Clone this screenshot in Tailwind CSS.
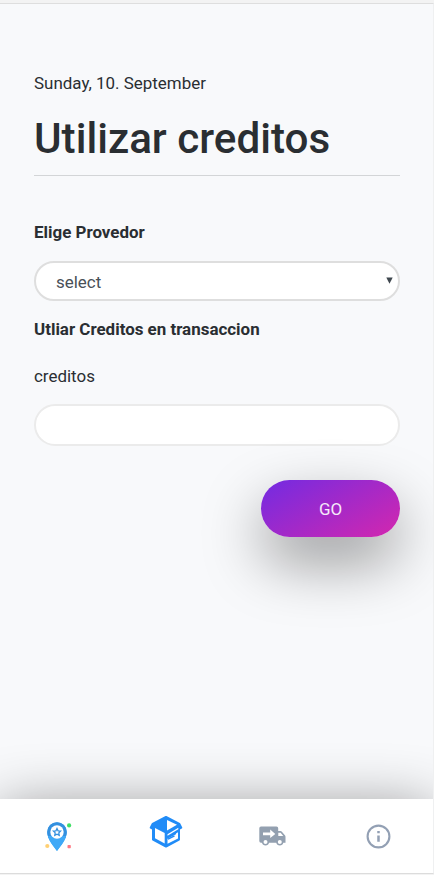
<!DOCTYPE html>
<html lang="es">
<head>
<meta charset="utf-8">
<meta name="viewport" content="width=device-width, initial-scale=1">
<title>Utilizar creditos</title>
<script src="https://cdn.jsdelivr.net/npm/@tailwindcss/browser@4"></script>
</head>
<body class="font-[Roboto,sans-serif] text-[16.94px] leading-6 text-[#2a2e32] bg-[#f3f3f3]">
<div class="flex h-[875px] w-[434px] flex-col overflow-hidden pt-[3px]">
  <div class="flex h-[871px] flex-col overflow-hidden border-y border-r border-t-[#dedede] border-r-[#eff0f1] border-b-[#dcdcdc] bg-[#f8f9fb]">
    <main class="flex flex-1 flex-col px-[34px] pr-[33px] pt-[67px]">
      <p>Sunday, 10. September</p>
      <h1 class="mt-[19px] text-[42.2px] leading-[50px] font-medium whitespace-nowrap">Utilizar creditos</h1>
      <hr class="mt-[11px] border-t border-[#d3d5d7]">
      <form class="flex flex-col">
        <label class="mt-[44px] font-bold">Elige Provedor</label>
        <div class="mt-[17px] flex h-10 items-center justify-between rounded-full border-2 border-[#dedede] bg-white pl-[20px] pr-[5px] text-[#495057]">
          <span class="pt-px">select</span>
          <svg class="-mt-[1px] h-[7px] w-[7px]" viewBox="0 0 7 7" fill="#3f474e"><path d="M.3.5h6.400L3.500 6.700z"/></svg>
        </div>
        <label class="mt-[16px] font-bold">Utliar Creditos en transaccion</label>
        <label class="mt-[23px]">creditos</label>
        <input class="mt-[16px] h-[42px] rounded-full border-2 border-[#ebebeb] bg-white px-5">
        <button type="button" class="mt-[34px] h-[57px] w-[139px] self-end rounded-full bg-linear-[150deg,#722be2,#d427ae] text-[16.94px] text-white/90 shadow-[0_25px_60px_rgba(0,0,0,0.4)]">GO</button>
      </form>
    </main>
    <nav class="grid h-[74px] shrink-0 grid-cols-4 bg-white shadow-[0_10px_60px_rgba(0,0,0,0.45)]">
      <div class="flex justify-center pt-[22px] pl-[8px]">
        <svg class="h-[31px] w-[28px]" viewBox="0 0 28 31" fill="none">
          <path d="M13 30C9 24 3.200 18 3.200 11a9.800 9.800 0 0 1 19.600 0C22.800 18 17 24 13 30z" fill="#40a9f7"/>
          <path d="M13 1.200A9.800 9.800 0 0 0 3.200 11c0 2 .6 4.100 1.500 6h16.600c.9-1.900 1.500-4 1.500-6A9.800 9.800 0 0 0 13 1.200z" fill="#3490df"/>
          <path d="M3.900 15h18.200c-1.500 6-5.700 10-9.100 15-3.400-5-7.600-9-9.100-15z" fill="#40a9f7"/>
          <circle cx="13" cy="11" r="6.700" fill="#fff"/>
          <path d="m13 7.500 1.100 2.300 2.500.3-1.800 1.800.4 2.500-2.200-1.200-2.200 1.200.4-2.500-1.800-1.800 2.500-.3z" stroke="#3490df" stroke-width="1.300"/>
          <circle cx="25.100" cy="4.400" r="2.100" fill="#3fdf65"/><circle cx="3.300" cy="25" r="2.100" fill="#ffd074"/><rect x="23.500" y="24" width="3.300" height="3.300" rx=".7" fill="#ff7882"/>
        </svg>
      </div>
      <div class="flex justify-center pt-[16px] pl-[8px]">
        <svg class="h-[33px] w-[34px]" viewBox="0 0 34 33">
          <path d="M17 2 3.600 9 1.700 12.600 4 14v10.500L17 31.500l13-7V14l2.300-1.400L30.400 9z" fill="#218cf7" stroke="#218cf7" stroke-width="2" stroke-linejoin="round"/>
          <g fill="#fff">
            <path d="M18 5v10.500L28 9.700z"/>
            <path d="M6 13 15.700 18v10.600L6 23.300z"/>
            <path d="m18.500 19.200 10.800-6.400v1.500l-10.800 6.400z"/>
            <path d="M18.500 23.700 27 19.200v-.8l2-1.100v6.100l-10.500 5.400v-3z"/>
          </g>
          <path d="m19 24.200 6.500-3.400" stroke="#218cf7" stroke-width="1.500"/>
        </svg>
      </div>
      <div class="flex justify-center pt-[27px] pl-[3px]">
        <svg class="h-[21px] w-[27px]" viewBox="0 0 27 21">
          <path fill="#93a0b0" fill-rule="evenodd" d="M2 .5h15.500A1.700 1.700 0 0 1 19.200 2.200V5h2.200c.6 0 1.100.2 1.500.7l3 3.600c.5.600.6 1 .6 1.700v5.700h-2.200a3.600 3.600 0 0 1-7 0H10a3.600 3.600 0 0 1-7 0H2a1.700 1.700 0 0 1-1.700-1.700V2.200A1.700 1.700 0 0 1 2 .5zm2 6v2.700h7.200v2.900L16.300 8l-5.100-4.400v2.900zm15.300.3v3.300h5l-2.700-3.300zM6.500 14a2 2 0 1 0 0 4 2 2 0 0 0 0-4zm14.300 0a2 2 0 1 0 0 4 2 2 0 0 0 0-4z"/>
        </svg>
      </div>
      <div class="flex justify-center pt-[25px]">
        <svg class="h-[25px] w-[25px]" viewBox="0 0 25 25" fill="none" stroke="#93a0b4" stroke-width="2.100"><circle cx="12.500" cy="12.500" r="10.900"/><path d="M12.500 11.500v6.300M12.500 7v2.300" stroke-width="2.500"/></svg>
      </div>
    </nav>
  </div>
</div>
</body>
</html>
